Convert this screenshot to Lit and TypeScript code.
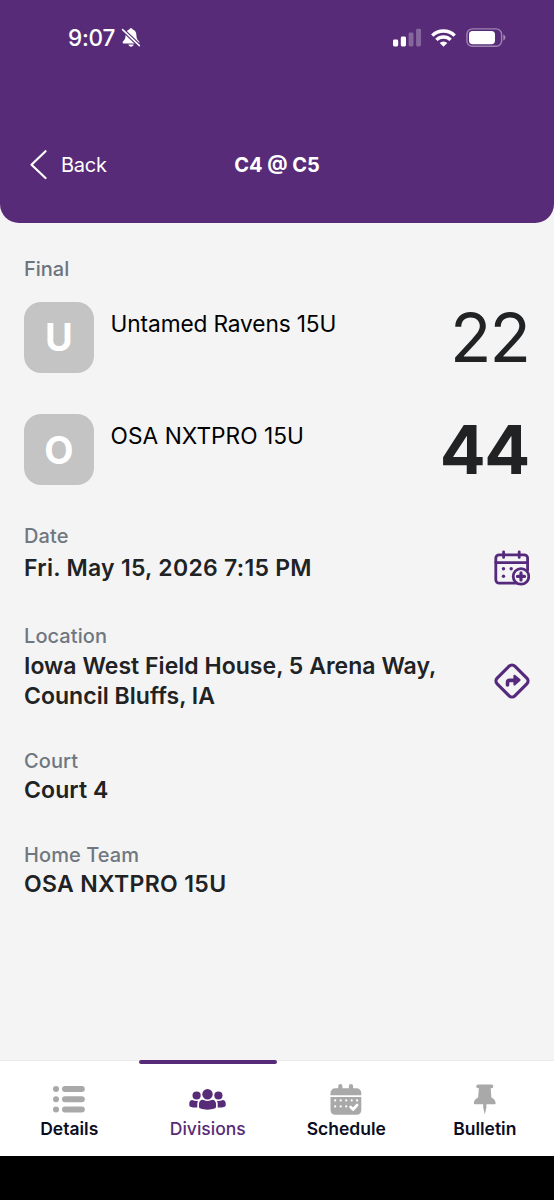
import { LitElement, html, css, svg, nothing } from "lit";
import { customElement, property } from "lit/decorators.js";

const silentBell = svg`
  <svg width="20" height="22" viewBox="0 0 20 22" fill="#fff">
    <path d="M10 1.200c-.9 0-1.600.6-1.700 1.400C5.900 3.400 4.700 5.400 4.600 8c-.1 3.300-.8 4.700-2.300 6-.5.500-.7.900-.7 1.400 0 .7.500 1.100 1.300 1.100h14.200c.8 0 1.300-.4 1.300-1.100 0-.5-.2-.9-.7-1.400-1.500-1.300-2.200-2.700-2.300-6-.1-2.600-1.300-4.600-3.700-5.400C11.600 1.800 10.900 1.200 10 1.200z"/>
    <path d="M7.400 17.600c.3 1.300 1.300 2.100 2.600 2.100s2.300-.8 2.600-2.100z"/>
    <path d="M1.600 2.600 18.400 18.600" stroke="#572b78" stroke-width="3.800"/>
    <path d="M1.600 2.600 18.400 18.600" stroke="#fff" stroke-width="1.500" stroke-linecap="round"/>
  </svg>`;

const signal = svg`
  <svg width="28" height="19" viewBox="0 0 28 19" fill="#fff">
    <rect x="0" y="11.500" width="5.200" height="7" rx="1.400"/>
    <rect x="7.800" y="8.500" width="5.200" height="10" rx="1.400"/>
    <rect x="15.600" y="4.500" width="4.900" height="14" rx="1.400" opacity=".28"/>
    <rect x="23.100" y=".7" width="4.900" height="17.800" rx="1.400" opacity=".28"/>
  </svg>`;

const wifi = svg`
  <svg width="25" height="18" viewBox="0 0 25 18">
    <g fill="none" stroke="#fff" stroke-width="3.400">
      <path d="M1.300 6.600a16 16 0 0 1 22.400 0"/>
      <path d="M5.400 10.900a10.200 10.200 0 0 1 14.200 0"/>
    </g>
    <path d="M12.500 17.800 8.700 14a5.400 5.400 0 0 1 7.600 0z" fill="#fff"/>
  </svg>`;

const battery = svg`
  <svg width="40" height="20" viewBox="0 0 40 20">
    <rect x=".9" y=".9" width="34.700" height="17.400" rx="5.400" fill="none" stroke="#fff" stroke-opacity=".42" stroke-width="1.400"/>
    <rect x="3" y="3" width="26" height="13.200" rx="3.600" fill="#fff"/>
    <path d="M37.300 6.600c1.300.5 2.100 1.600 2.100 3s-.8 2.500-2.100 3z" fill="#fff" opacity=".45"/>
  </svg>`;

const chevron = svg`
  <svg width="18" height="30" viewBox="0 0 18 30" fill="none" stroke="#fff" stroke-width="2.200" stroke-linecap="round" stroke-linejoin="round">
    <path d="M15.500 1.200 1.500 14.700l14 13.300"/>
  </svg>`;

const addToCalendar = svg`
  <svg width="36" height="36" viewBox="0 0 36 36" fill="none" stroke="#552a7c" stroke-width="2.800" stroke-linecap="round" stroke-linejoin="round">
    <path d="M22 33.200H5.200A3.400 3.400 0 0 1 1.800 29.800V8.200a3.400 3.400 0 0 1 3.400-3.400h25A3.400 3.400 0 0 1 33.600 8.200v12"/>
    <path d="M1.800 12.600h31.800M9.600 1.800v5.600M25.200 1.800v5.600"/>
    <circle cx="27" cy="26.400" r="7.800" fill="#f4f4f4"/>
    <path d="M27 22.900v7M23.500 26.400h7" stroke-width="3.200"/>
    <g fill="#552a7c" stroke="none">
      <circle cx="9.500" cy="18.700" r="1.700"/>
      <circle cx="17.200" cy="18.700" r="1.700"/>
      <circle cx="9.500" cy="26.300" r="1.700"/>
    </g>
  </svg>`;

const directions = svg`
  <svg width="36" height="36" viewBox="0 0 36 36" fill="none">
    <rect x="5.500" y="5.500" width="25" height="25" rx="4" transform="rotate(45 18 18)" stroke="#552a7c" stroke-width="3.200"/>
    <path d="M13.500 22v-2.400q0-2.200 2.200-2.200h5" stroke="#552a7c" stroke-width="3.600" stroke-linecap="round"/>
    <path d="M19.400 12.800c0-1.100 1.100-1.500 1.900-.8l4.800 4.100c.7.600.7 1.300 0 1.900l-4.800 4.200c-.8.700-1.900.3-1.900-.8z" fill="#552a7c"/>
  </svg>`;

const listIcon = svg`
  <svg width="32" height="27" viewBox="0 0 32 27" fill="#a9a9a9">
    <circle cx="3" cy="3" r="3"/><rect x="9" y="0" width="22.800" height="6" rx="3"/>
    <circle cx="3" cy="13.300" r="3"/><rect x="9" y="10.300" width="22.800" height="6" rx="3"/>
    <circle cx="3" cy="23.600" r="3"/><rect x="9" y="20.600" width="22.800" height="6" rx="3"/>
  </svg>`;

const groupIcon = svg`
  <svg width="37" height="21" viewBox="0 0 37 21" fill="#572b78">
    <circle cx="18.500" cy="5.200" r="5.200"/>
    <circle cx="7.600" cy="6.500" r="4.100"/>
    <circle cx="29.400" cy="6.500" r="4.100"/>
    <path d="M10 14.800c0-2.300 1.600-4 3.500-4 .8 0 2.300 1.100 5 1.100s4.200-1.100 5-1.100c1.900 0 3.500 1.700 3.500 4v2.600c0 1.200-.5 1.800-1.600 2.200-3.900 1.500-9.900 1.500-13.800 0-1.100-.4-1.600-1-1.600-2.200z"/>
    <path d="M3.200 11c.8 0 1.800.8 4 .9.800 0 1.300 0 1.900-.2-.6 1-.8 2-.8 3.300v2.700c0 .3 0 .6.1.8-2.600.3-5 0-6.900-.8C.6 17.300.3 16.900.3 16v-1.600C.3 12.300 1.500 11 3.200 11z"/>
    <path d="M33.800 11c-.8 0-1.800.8-4 .9-.8 0-1.300 0-1.900-.2.600 1 .8 2 .8 3.300v2.700c0 .3 0 .6-.1.800 2.600.3 5 0 6.900-.8.900-.4 1.200-.8 1.200-1.700v-1.600c0-2.100-1.200-3.400-2.900-3.400z"/>
  </svg>`;

const scheduleIcon = svg`
  <svg width="32" height="32" viewBox="0 0 32 32">
    <g fill="#a9a9a9">
      <rect x="8.200" y="0" width="4.200" height="8" rx="2.100"/>
      <rect x="18.900" y="0" width="4.200" height="8" rx="2.100"/>
      <path d="M.5 11.200V9.500C.5 6.300 2.300 4.300 5.500 4.300h20.800c3.200 0 5 2 5 5.200v1.700z"/>
      <path d="M.5 13h30.800v12.800c0 3.200-1.800 5-5 5H5.500c-3.200 0-5-1.800-5-5z"/>
    </g>
    <g fill="#fff">
      <circle cx="5.200" cy="16.400" r="1.100"/><circle cx="10.700" cy="16.400" r="1.100"/><circle cx="16.200" cy="16.400" r="1.100"/><circle cx="21.700" cy="16.400" r="1.100"/><circle cx="27" cy="16.400" r="1.100"/>
      <circle cx="5.200" cy="22.400" r="1.100"/><circle cx="10.700" cy="22.400" r="1.100"/><circle cx="16.200" cy="22.400" r="1.100"/>
    </g>
    <path d="m20.600 23 2.500 2.500 4-4.500" fill="none" stroke="#fff" stroke-width="2.700" stroke-linecap="round" stroke-linejoin="round"/>
  </svg>`;

const pinIcon = svg`
  <svg width="24" height="31" viewBox="0 0 24 31" fill="#a9a9a9">
    <path d="M5 .4h13.600c1 0 1.700.8 1.700 1.900 0 1.300-.7 2-1.700 2h-.9l.7 9.100c2.500 1.100 4.200 3.300 4.200 5.500 0 1-.5 1.400-1.400 1.400H2.300C1.400 20.300.9 19.900.9 18.900c0-2.200 1.700-4.400 4.200-5.500l.8-9.100H5c-1 0-1.700-.7-1.700-2C3.300 1.200 4 .4 5 .4z"/>
    <path d="M10.200 20h3.200v3.500l-1.600 7-1.600-7z"/>
  </svg>`;

@customElement("status-bar")
class StatusBar extends LitElement {
  static styles = css`
    :host { display: flex; align-items: center; justify-content: space-between; height: 75px; padding: 0 48px 0 68px; box-sizing: border-box; color: #fff; }
    .clock { display: flex; align-items: center; gap: 6px; font-size: 22.500px; font-weight: 500; letter-spacing: -0.200px; line-height: 27px; }
    .status { display: flex; align-items: center; gap: 10px; }
    svg { display: block; }
    .battery { margin-top: 1px; }
  `;
  render() {
    return html`
      <div class="clock"><span>9:07</span>${silentBell}</div>
      <div class="status">
        <span>${signal}</span><span>${wifi}</span><span class="battery">${battery}</span>
      </div>`;
  }
}

@customElement("team-row")
class TeamRow extends LitElement {
  @property() name = "";
  @property() score = "";
  @property({ type: Boolean }) winner = false;
  static styles = css`
    :host { display: flex; height: 70.6px; color: #000; }
    .badge { flex: none; width: 70.6px; margin-left: -0.500px; border-radius: 17px; background: #c4c4c4; color: #fff; display: flex; align-items: center; justify-content: center; font-size: 38px; font-weight: 700; line-height: 70px; }
    .name { flex: 1; padding: 7.600px 0 0 16.500px; font-size: 22.700px; line-height: 27px; letter-spacing: -0.130px; }
    .name.wide { letter-spacing: 0.030px; }
    .score { margin-right: 1px; font-size: 68px; line-height: 70.6px; color: #202224; letter-spacing: -2px; }
    .score.winner { font-weight: 700; letter-spacing: -1.300px; }
  `;
  render() {
    return html`
      <div class="badge">${this.name.charAt(0)}</div>
      <div class="name ${this.winner ? "wide" : ""}">${this.name}</div>
      <div class="score ${this.winner ? "winner" : ""}">${this.score}</div>`;
  }
}

@customElement("info-field")
class InfoField extends LitElement {
  @property() label = "";
  @property() tracking = "normal";
  @property({ attribute: false }) lines: string[] = [];
  @property({ attribute: false }) icon: unknown = nothing;
  static styles = css`
    :host { display: grid; gap: 2.500px; }
    .label { font-size: 20px; line-height: 24px; font-weight: 500; color: #6f7780; letter-spacing: 0.080px; }
    .row { display: flex; align-items: center; justify-content: space-between; }
    .value { padding-top: 1px; margin-bottom: -1px; font-size: 23px; line-height: 29.800px; font-weight: 600; color: #202224; letter-spacing: 0.030px; }
    .value.loose { padding-top: 0; margin-bottom: 0; letter-spacing: 0.280px; }
    .value.snug { letter-spacing: 0.100px; }
    .value.looser { letter-spacing: 0.340px; }
    svg { display: block; }
  `;
  render() {
    return html`
      <div class="label">${this.label}</div>
      <div class="row">
        <div class="value ${this.tracking}">${this.lines.map((l) => html`<div>${l}</div>`)}</div>
        ${this.icon}
      </div>`;
  }
}

@customElement("tab-bar")
class TabBar extends LitElement {
  static styles = css`
    :host { display: grid; grid-template-columns: repeat(4, 1fr); height: 96px; background: #fff; }
    .tab { display: flex; flex-direction: column; align-items: center; border-top: 1px solid #ebebeb; box-sizing: border-box; height: 96px; color: #0b0d23; }
    .active { border-top: none; color: #572b78; }
    .active::before { content: ""; width: 100%; height: 4px; border-radius: 2px; background: #572b78; }
    .icon { display: flex; align-items: center; justify-content: center; height: 36px; margin-top: 20.500px; }
    .active .icon { margin-top: 17.500px; }
    .label { font-size: 17.500px; line-height: 22px; font-weight: 600; padding-top: 0.500px; }
    .active .label { font-weight: 500; }
    svg { display: block; }
  `;
  private tabs = [
    { label: "Details", icon: listIcon },
    { label: "Divisions", icon: groupIcon, active: true },
    { label: "Schedule", icon: scheduleIcon },
    { label: "Bulletin", icon: pinIcon },
  ];
  render() {
    return this.tabs.map(
      (t) => html`<div class="tab ${t.active ? "active" : ""}">
        <div class="icon">${t.icon}</div>
        <div class="label">${t.label}</div>
      </div>`,
    );
  }
}

@customElement("app-root")
class AppRoot extends LitElement {
  static styles = css`
    :host { display: flex; flex-direction: column; height: 1200px; background: #f4f4f4; font-family: Inter, "Liberation Sans", sans-serif; overflow: hidden; }
    .header { flex: none; height: 223px; background: #572b78; border-radius: 0 0 19px 19px; color: #fff; }
    .nav { display: grid; grid-template-columns: 1fr auto 1fr; align-items: center; margin-top: 74.500px; padding: 0 30px; height: 30px; font-size: 20px; line-height: 30px; }
    .back { display: flex; align-items: center; gap: 13px; letter-spacing: -0.250px; }
    .back svg { display: block; }
    .title { font-weight: 700; }
    .content { flex: 1; padding: 33.500px 24px 0; }
    .state { font-size: 20px; line-height: 24px; font-weight: 500; color: #6c757d; }
    .teams { display: grid; gap: 41.900px; margin-top: 21.500px; }
    .fields { display: grid; gap: 38px; margin-top: 38.900px; }
    .home { flex: none; height: 44px; background: #000; }
    tab-bar { flex: none; }
  `;
  render() {
    return html`
      <header class="header">
        <status-bar></status-bar>
        <nav class="nav">
          <div class="back">${chevron}<span>Back</span></div>
          <div class="title">C4 @ C5</div>
        </nav>
      </header>
      <main class="content">
        <div class="state">Final</div>
        <div class="teams">
          <team-row name="Untamed Ravens 15U" score="22"></team-row>
          <team-row name="OSA NXTPRO 15U" score="44" winner></team-row>
        </div>
        <div class="fields">
          <info-field label="Date" tracking="loose" .lines=${["Fri. May 15, 2026 7:15 PM"]} .icon=${addToCalendar}></info-field>
          <info-field label="Location" .lines=${["Iowa West Field House, 5 Arena Way,", "Council Bluffs, IA"]} .icon=${directions}></info-field>
          <info-field label="Court" tracking="snug" .lines=${["Court 4"]}></info-field>
          <info-field label="Home Team" tracking="looser" .lines=${["OSA NXTPRO 15U"]}></info-field>
        </div>
      </main>
      <tab-bar></tab-bar>
      <div class="home"></div>`;
  }
}
